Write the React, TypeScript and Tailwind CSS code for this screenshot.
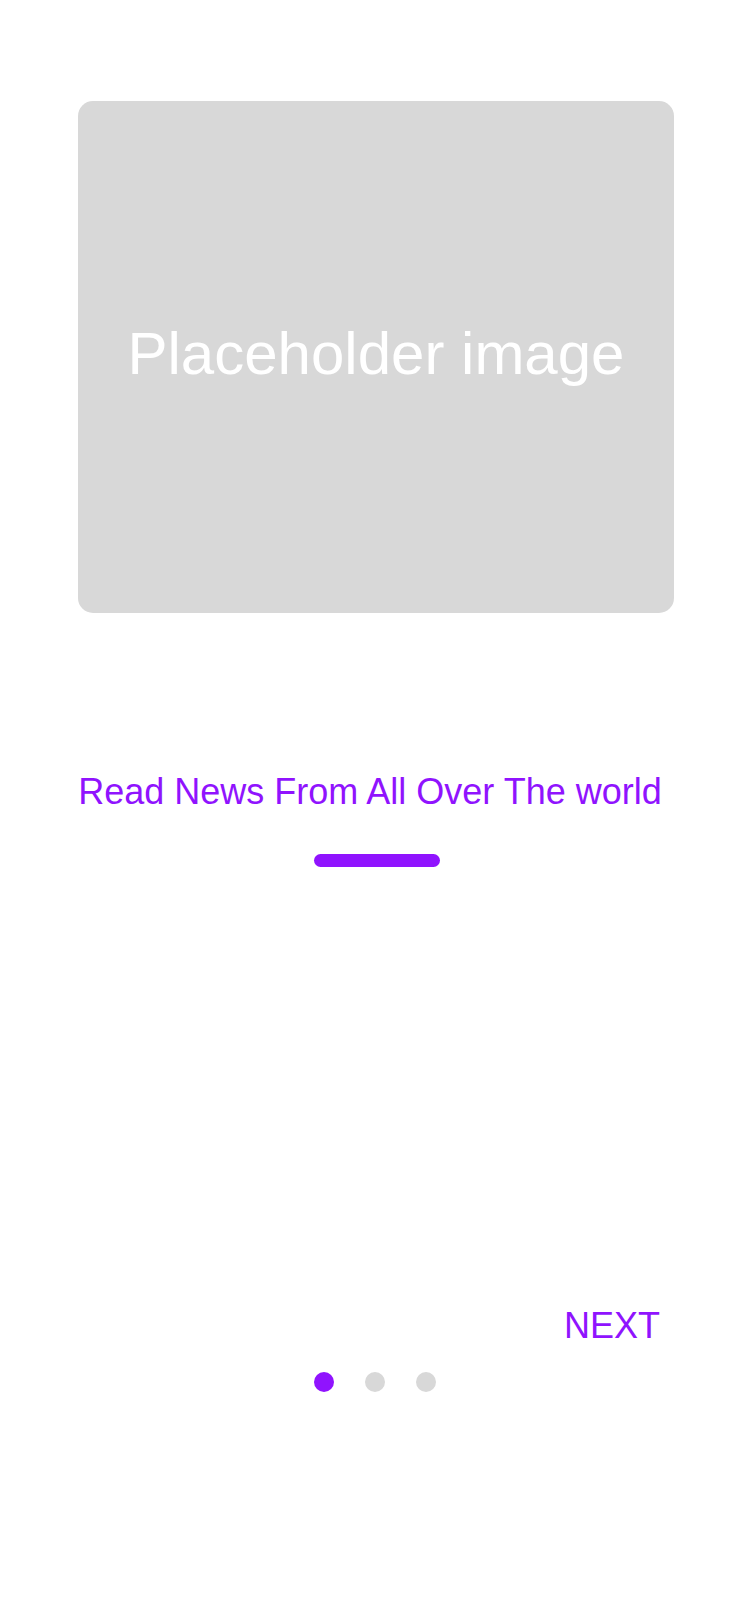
import React from "react";

export default function App() {
  return (
    <div
      className="w-[750px] h-[1624px] bg-white flex flex-col overflow-hidden"
      style={{ fontFamily: '"Liberation Sans", Arial, Helvetica, sans-serif' }}
    >
      <div className="mt-[101px] ml-[78px] w-[596px] h-[512px] rounded-[15px] bg-[#d8d8d8] flex items-center justify-center pb-[6px]">
        <span className="text-white text-[60px] leading-[70px]">Placeholder image</span>
      </div>
      <div className="mt-[159px] flex justify-center pr-[10px]">
        <h1 className="text-[#9013fe] text-[36px] leading-[40px] font-normal whitespace-nowrap">
          Read News From All Over The world
        </h1>
      </div>
      <div className="mt-[42px] ml-[314px] w-[126px] h-[13px] rounded-full bg-[#9013fe]" />
      <div className="mt-[439px] flex justify-end pr-[90px]">
        <button className="text-[#9013fe] text-[36px] leading-[40px]">NEXT</button>
      </div>
      <div className="mt-[26px] flex justify-center gap-[31px]">
        <span className="w-[20px] h-[20px] rounded-full bg-[#9013fe]" />
        <span className="w-[20px] h-[20px] rounded-full bg-[#d8d8d8]" />
        <span className="w-[20px] h-[20px] rounded-full bg-[#d8d8d8]" />
      </div>
    </div>
  );
}
